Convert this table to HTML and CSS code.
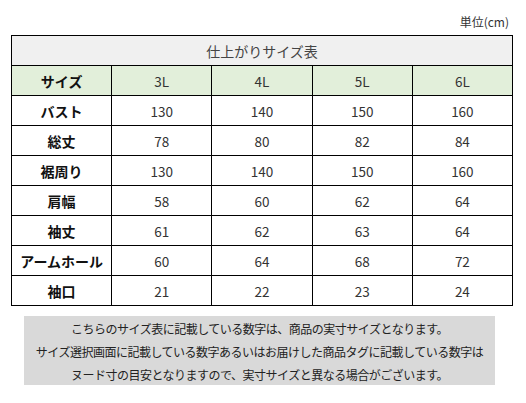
FILE: index.html
```html
<!DOCTYPE html>
<html lang="ja">
<head>
<meta charset="utf-8">
<link rel="stylesheet" href="styles.css">
</head>
<body>
<div class="page">
  <div class="unit">単位(cm)</div>
  <table class="size">
    <tr class="title"><td colspan="5">仕上がりサイズ表</td></tr>
    <tr class="head"><th>サイズ</th><td>3L</td><td>4L</td><td>5L</td><td>6L</td></tr>
    <tr><th>バスト</th><td>130</td><td>140</td><td>150</td><td>160</td></tr>
    <tr><th>総丈</th><td>78</td><td>80</td><td>82</td><td>84</td></tr>
    <tr><th>裾周り</th><td>130</td><td>140</td><td>150</td><td>160</td></tr>
    <tr><th>肩幅</th><td>58</td><td>60</td><td>62</td><td>64</td></tr>
    <tr><th>袖丈</th><td>61</td><td>62</td><td>63</td><td>64</td></tr>
    <tr><th>アームホール</th><td>60</td><td>64</td><td>68</td><td>72</td></tr>
    <tr><th>袖口</th><td>21</td><td>22</td><td>23</td><td>24</td></tr>
  </table>
  <div class="note">
    <p>こちらのサイズ表に記載している数字は、商品の実寸サイズとなります。</p>
    <p>サイズ選択画面に記載している数字あるいはお届けした商品タグに記載している数字は</p>
    <p>ヌード寸の目安となりますので、実寸サイズと異なる場合がございます。</p>
  </div>
</div>
</body>
</html>
```
FILE: styles.css
```css
html, body {
  margin: 0;
  padding: 0;
  background: #fff;
}
body {
  font-family: "Noto Sans CJK JP", "Noto Sans", sans-serif;
  color: #333;
}
.page {
  width: 526px;
  height: 403px;
  padding: 12px 13px 0 11px;
  box-sizing: border-box;
}
.unit {
  text-align: right;
  font-size: 12px;
  line-height: 20px;
  height: 23px;
  padding-right: 4px;
  color: #333;
}
.size {
  border-collapse: collapse;
  width: 502px;
  table-layout: fixed;
}
.size td, .size th {
  border: 1px solid #000;
  height: 29px;
  padding: 0;
  text-align: center;
  font-size: 13.5px;
  font-weight: normal;
  color: #333;
}
.size th {
  width: 111px;
  font-weight: bold;
  color: #111;
  font-size: 14px;
}
.title td {
  background: #f0f0f0;
  color: #444;
  font-size: 14px;
}
.head th, .head td {
  background: #e2efda;
}
.note {
  margin: 10px 18px 0 13px;
  background: #d9d9d9;
  padding: 1px 0 0;
  height: 69px;
  box-sizing: border-box;
  text-align: center;
  font-size: 12px;
  letter-spacing: -0.5px;
  line-height: 23px;
  color: #222;
  white-space: nowrap;
}
.note p {
  margin: 0;
}
```
